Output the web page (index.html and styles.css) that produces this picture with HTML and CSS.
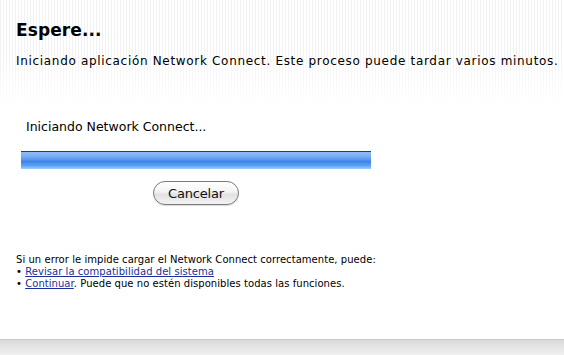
FILE: index.html
```html
<!DOCTYPE html>
<html>
<head>
<meta charset="utf-8">
<link rel="stylesheet" href="styles.css">
</head>
<body>
<div class="page">
  <header class="top">
    <h1 class="title">Espere...</h1>
    <p class="lead">Iniciando aplicación Network Connect. Este proceso puede tardar varios minutos.</p>
  </header>
  <section class="loader">
    <p class="status">Iniciando Network Connect...</p>
    <div class="bar"></div>
    <div class="actions"><button class="btn">Cancelar</button></div>
  </section>
  <section class="help">
    <p>Si un error le impide cargar el Network Connect correctamente, puede:</p>
    <p>• <a href="#">Revisar la compatibilidad del sistema</a></p>
    <p>• <a href="#">Continuar</a>. Puede que no estén disponibles todas las funciones.</p>
  </section>
</div>
<footer class="bottom"></footer>
</body>
</html>
```
FILE: styles.css
```css
html, body { margin: 0; padding: 0; }
body {
  width: 564px; height: 355px; overflow: hidden;
  background: #fff;
  font-family: "DejaVu Sans", Verdana, sans-serif;
  color: #000;
  display: flex; flex-direction: column;
}
.page {
  flex: 1;
  background:
    linear-gradient(to bottom, rgba(255,255,255,0) 0px, rgba(255,255,255,0) 45px, #fff 108px),
    repeating-linear-gradient(to right, #f1f1f1 0px, #f1f1f1 1px, #ffffff 1px, #ffffff 3px);
  background-size: 100% 110px, 100% 110px;
  background-repeat: no-repeat;
}
.top { padding: 19px 0 0 16px; }
.title { margin: 0; font-size: 17px; font-weight: bold; line-height: 22px; letter-spacing: 0.1px; }
.lead { margin: 13px 0 0; font-size: 12px; line-height: 15px; letter-spacing: 0.68px; white-space: nowrap; }
.loader { padding: 50px 0 0 21px; width: 350px; }
.status { margin: 0 0 0 5px; font-size: 12.5px; line-height: 16px; }
.bar {
  margin-top: 16px; height: 17px;
  border-top: 1px solid #1b3f86;
  background: linear-gradient(to bottom, #8fbdf6 0%, #79adf2 25%, #5a98ee 45%, #3f84ea 55%, #5aa0f4 80%, #9fd0ff 100%);
}
.actions { display: flex; justify-content: center; margin-top: 12px; }
.btn {
  width: 86px; height: 24px; padding: 0;
  border: 1px solid #7a7a7a; border-radius: 12px;
  background: linear-gradient(to bottom, #ffffff 0%, #f4f4f4 45%, #e2e2e2 55%, #f2f2f2 100%);
  font-family: "DejaVu Sans", sans-serif; font-size: 13px; letter-spacing: -0.2px; color: #111;
  box-shadow: 0 1px 1px rgba(0,0,0,0.15);
}
.help { padding: 49px 0 0 16px; font-size: 10px; line-height: 12px; letter-spacing: 0.05px; }
.help p { margin: 0; }
.help a { color: #1a2f9b; text-decoration: underline; }
.bottom {
  height: 15px; flex: none;
  border-top: 1px solid #c8c8c8;
  background: linear-gradient(to bottom, #dadada, #f0f0f0);
}
```
